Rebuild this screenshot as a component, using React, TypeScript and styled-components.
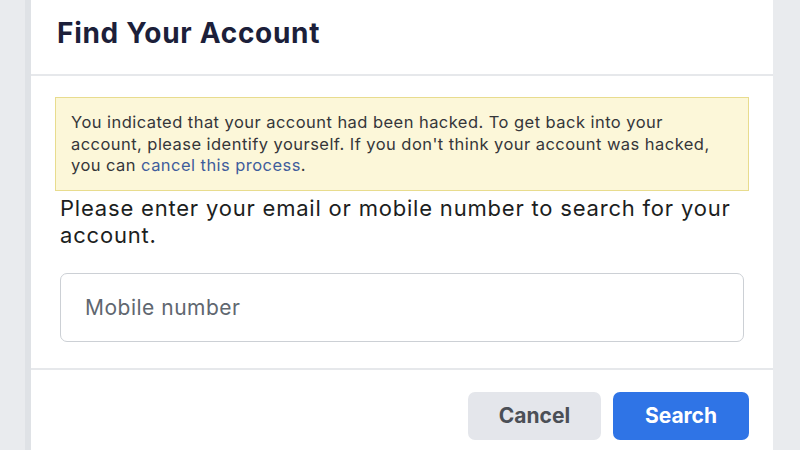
import React from "react";
import styled, { createGlobalStyle } from "styled-components";

const Global = createGlobalStyle`
  html, body { margin: 0; padding: 0; }
  body {
    width: 800px;
    height: 450px;
    overflow: hidden;
    background: #e9ebee;
    font-family: Inter, "Liberation Sans", Arial, sans-serif;
  }
`;

const Page = styled.div`
  display: flex;
  height: 450px;
  padding-left: 25px;
  background: #e9ebee;
  overflow: hidden;
`;

const Card = styled.div`
  width: 742px;
  height: 470px;
  background: #ffffff;
  border-left: 6px solid #dfe2e6;
  display: flex;
  flex-direction: column;
`;

const Header = styled.div`
  box-sizing: border-box;
  height: 76px;
  padding: 16px 26px 0;
  border-bottom: 2px solid #e6e8eb;
`;

const Title = styled.h2`
  margin: 0;
  font-size: 28px;
  line-height: 34px;
  font-weight: 700;
  letter-spacing: 0.7px;
  color: #1c1f3a;
`;

const Body = styled.div`
  padding: 21px 24px 26px;
  border-bottom: 2px solid #e6e8eb;
`;

const Notice = styled.div`
  background: #fcf7d9;
  border: 1px solid #e8dc8e;
  padding: 14px 22px 13px 15px;
  font-size: 16.5px;
  line-height: 21.6px;
  letter-spacing: 0.45px;
  color: #35363a;
`;

const Link = styled.a`
  color: #3f5d9c;
  text-decoration: none;
`;

const Form = styled.div`
  padding: 0 5px;
`;

const Prompt = styled.p`
  margin: 4px 0 24px;
  font-size: 22px;
  line-height: 27px;
  letter-spacing: 0.8px;
  color: #1c1e21;
`;

const Input = styled.input`
  box-sizing: border-box;
  width: 100%;
  height: 69px;
  border: 1px solid #ccd0d5;
  border-radius: 7px;
  padding: 0 24px;
  font-family: inherit;
  font-size: 21px;
  letter-spacing: 0.5px;
  color: #1c1e21;
  outline: none;
  &::placeholder {
    color: #606770;
  }
`;

const Footer = styled.div`
  display: flex;
  justify-content: flex-end;
  gap: 12px;
  padding: 22px 24px 0;
`;

const Button = styled.button<{ $primary?: boolean }>`
  height: 48px;
  width: ${(p) => (p.$primary ? "136px" : "133px")};
  border: none;
  border-radius: 7px;
  font-family: inherit;
  font-size: 21px;
  font-weight: 700;
  background: ${(p) => (p.$primary ? "#2f74e6" : "#e4e6eb")};
  color: ${(p) => (p.$primary ? "#ffffff" : "#4b4f56")};
  cursor: pointer;
`;

export default function App() {
  return (
    <>
      <Global />
      <Page>
        <Card>
          <Header>
            <Title>Find Your Account</Title>
          </Header>
          <Body>
            <Notice>
              You indicated that your account had been hacked. To get back into your
              account, please identify yourself. If you don't think your account was hacked,
              you can <Link href="#">cancel this process</Link>.
            </Notice>
            <Form>
              <Prompt>
                Please enter your email or mobile number to search for your account.
              </Prompt>
              <Input placeholder="Mobile number" />
            </Form>
          </Body>
          <Footer>
            <Button>Cancel</Button>
            <Button $primary>Search</Button>
          </Footer>
        </Card>
      </Page>
    </>
  );
}
